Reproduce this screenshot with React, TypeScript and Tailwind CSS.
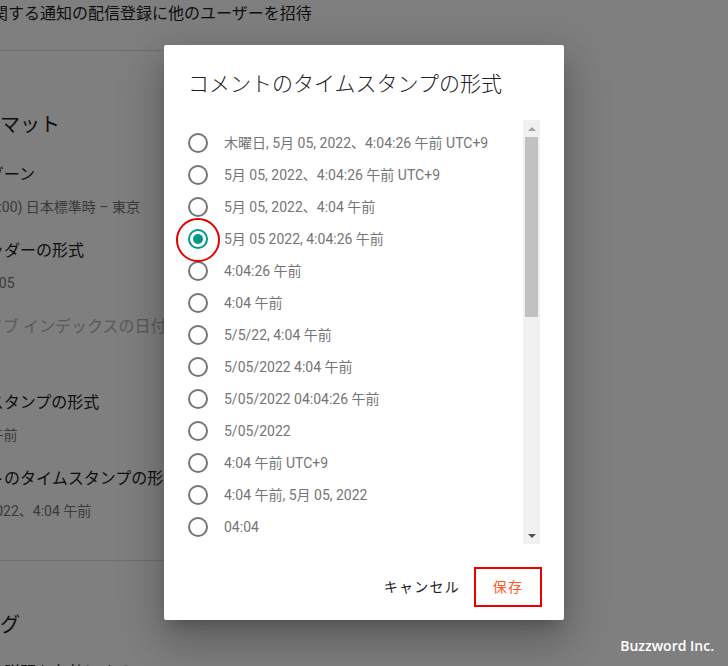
const formats = [
  '木曜日, 5月 05, 2022、4:04:26 午前 UTC+9',
  '5月 05, 2022、4:04:26 午前 UTC+9',
  '5月 05, 2022、4:04 午前',
  '5月 05 2022, 4:04:26 午前',
  '4:04:26 午前',
  '4:04 午前',
  '5/5/22, 4:04 午前',
  '5/05/2022 4:04 午前',
  '5/05/2022 04:04:26 午前',
  '5/05/2022',
  '4:04 午前 UTC+9',
  '4:04 午前, 5月 05, 2022',
  '04:04',
  '04:04:26',
  '04:04 UTC+9',
];

const selectedIndex = 3;

function Radio({ checked }: { checked: boolean }) {
  return (
    <span
      className={`flex h-5 w-5 shrink-0 items-center justify-center rounded-full border-2 ${
        checked ? 'border-[#009688]' : 'border-[#757575]'
      }`}
    >
      {checked && <span className="h-[10px] w-[10px] rounded-full bg-[#009688]" />}
    </span>
  );
}

function SettingsPage() {
  return (
    <div className="flex w-[480px] flex-col whitespace-nowrap text-[#212121]">
      <div className="-ml-[88px] pt-[2px] text-[16px] leading-6">コメントに関する通知の配信登録に他のユーザーを招待</div>
      <div className="mt-6 h-px bg-[#dadce0]" />

      <div className="-ml-[60px] flex flex-col">
        <h2 className="mt-[60px] text-[20px] leading-7">フォーマット</h2>

        <div className="mt-6 text-[16px] leading-6">タイムゾーン</div>
        <div className="mt-[10px] text-[14px] leading-5 text-[#757575]">(GMT+09:00) 日本標準時 – 東京</div>

        <div className="mt-[22px] text-[16px] leading-6">日付ヘッダーの形式</div>
        <div className="mt-[10px] text-[14px] leading-5 text-[#757575]">2022/05/05</div>

        <div className="mt-[22px] text-[16px] leading-6 text-[#b4b4b4]">アーカイブ インデックスの日付の形式</div>

        <div className="mt-[52px] text-[16px] leading-6">タイムスタンプの形式</div>
        <div className="mt-[10px] text-[14px] leading-5 text-[#757575]">4:04:26 午前</div>

        <div className="mt-[22px] text-[16px] leading-6">コメントのタイムスタンプの形式</div>
        <div className="mt-[10px] text-[14px] leading-5 text-[#757575]">5月 05, 2022、4:04 午前</div>
      </div>

      <div className="mt-[39px] h-px bg-[#dadce0]" />

      <div className="-ml-[60px] flex flex-col">
        <h2 className="mt-[50px] text-[20px] leading-7">メタタグ</h2>
        <div className="mt-[22px] text-[16px] leading-6">検索向け説明を有効にする</div>
      </div>
    </div>
  );
}

function Scrollbar() {
  return (
    <div className="flex w-[17px] shrink-0 flex-col items-center bg-[#f1f1f1]">
      <div className="flex h-[17px] w-full items-center justify-center">
        <span className="h-0 w-0 border-x-[4px] border-b-[4px] border-x-transparent border-b-[#a3a3a3]" />
      </div>
      <div className="h-[180px] w-[13px] bg-[#c1c1c1]" />
      <div className="flex-1" />
      <div className="flex h-[17px] w-full items-center justify-center">
        <span className="h-0 w-0 border-x-[4px] border-t-[4px] border-x-transparent border-t-[#505050]" />
      </div>
    </div>
  );
}

function FormatDialog() {
  return (
    <div className="absolute left-[164px] top-[45px] flex h-[575px] w-[400px] flex-col rounded-[2px] bg-white shadow-[0_11px_15px_-7px_rgba(0,0,0,0.2),0_24px_38px_3px_rgba(0,0,0,0.14),0_9px_46px_8px_rgba(0,0,0,0.12)]">
      <h1 className="px-6 pt-[25px] text-[21px] font-light leading-7 text-[#212121]">コメントのタイムスタンプの形式</h1>

      <div className="relative mx-6 mt-[22px] flex h-[424px]">
        <ul className="flex-1 overflow-hidden pt-[7px]">
          {formats.map((f, i) => (
            <li key={f} className="flex h-8 items-center">
              <Radio checked={i === selectedIndex} />
              <span className="ml-4 whitespace-nowrap text-[14px] text-[#757575]">{f}</span>
            </li>
          ))}
        </ul>
        <Scrollbar />
        {/* annotation around the selected option */}
        <span className="absolute left-[-12px] top-[98px] h-[44px] w-[44px] rounded-full border-2 border-[#e00000]" />
      </div>

      <div className="mt-[25px] flex items-center justify-end gap-2 pr-6">
        <button className="h-9 px-2 text-[14px] tracking-[1.25px] text-[#212121]">キャンセル</button>
        <button className="relative h-9 min-w-[64px] px-2 text-[14px] tracking-[1.25px] text-[#ff5722]">
          保存
          <span className="absolute -inset-[2px] border-2 border-[#ee0000]" />
        </button>
      </div>
    </div>
  );
}

export default function App() {
  return (
    <div className="relative h-[666px] w-[728px] overflow-hidden bg-white font-['Roboto','Noto_Sans_CJK_JP',sans-serif]">
      <SettingsPage />
      <div className="absolute inset-0 bg-black/50" />
      <FormatDialog />
      <div className="absolute bottom-[10px] right-[14px] font-['Open_Sans',sans-serif] text-[14px] font-semibold leading-5 text-white">
        Buzzword Inc.
      </div>
    </div>
  );
}
